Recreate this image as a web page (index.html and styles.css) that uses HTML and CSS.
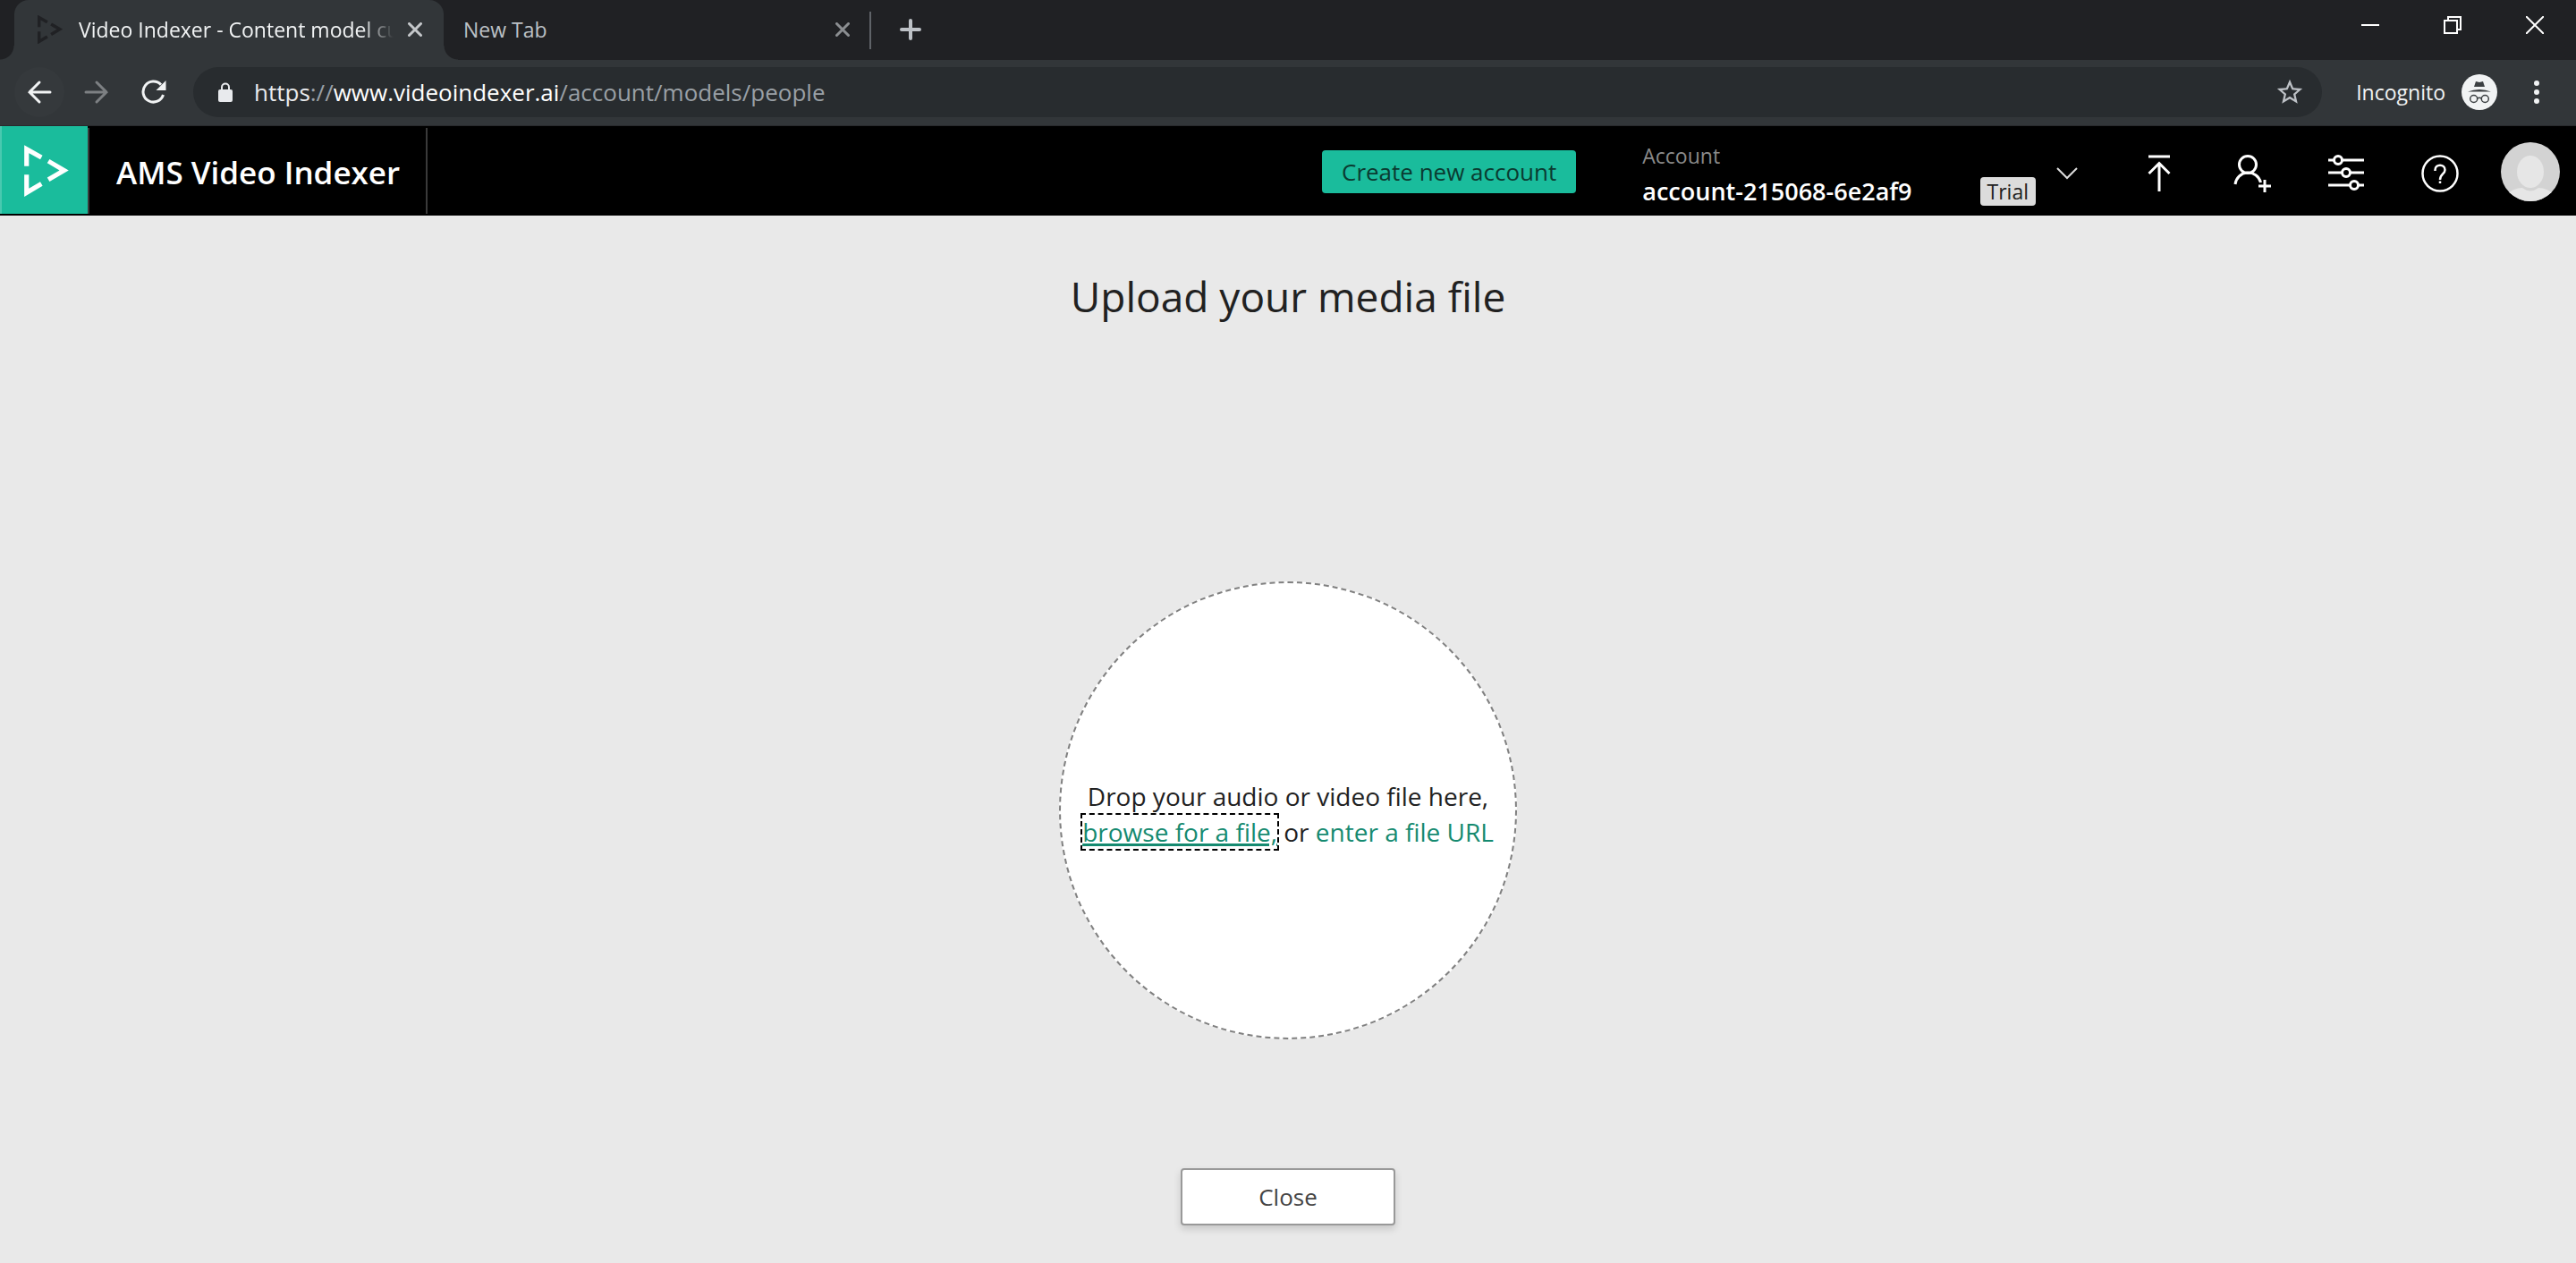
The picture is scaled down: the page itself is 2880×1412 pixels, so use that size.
FILE: index.html
```html
<!DOCTYPE html>
<html lang="en">
<head>
<meta charset="utf-8">
<title>Video Indexer - Content model customization</title>
<link rel="stylesheet" href="styles.css">
</head>
<body>
<div class="browser">
  <div class="tabstrip">
    <div class="tab tab-active">
      <svg class="favicon" width="28" height="32" viewBox="0 0 48 56" aria-hidden="true"><path d="M2.500 23V4.500L18.500 13.500M2.500 32V51.500L18.500 42M26 17.500L43 27.500L26 37.500" fill="none" stroke="#202124" stroke-width="6"/></svg>
      <span class="tab-title">Video Indexer - Content model cu</span>
      <button class="icon-btn tab-close" aria-label="Close tab"><svg width="16" height="16" viewBox="0 0 16 16"><path d="M1.500 1.500L14.500 14.500M14.500 1.500L1.500 14.500" stroke="#c4c7ca" stroke-width="3" stroke-linecap="round"/></svg></button>
    </div>
    <div class="tab tab-idle">
      <span class="tab-title">New Tab</span>
      <button class="icon-btn tab-close" aria-label="Close tab"><svg width="16" height="16" viewBox="0 0 16 16"><path d="M1.500 1.500L14.500 14.500M14.500 1.500L1.500 14.500" stroke="#8b8e91" stroke-width="3" stroke-linecap="round"/></svg></button>
    </div>
    <button class="icon-btn new-tab" aria-label="New tab"><svg width="24" height="24" viewBox="0 0 24 24"><path d="M12 2V22M2 12H22" stroke="#bdc1c6" stroke-width="4" stroke-linecap="round"/></svg></button>
    <div class="window-controls">
      <button class="icon-btn win-btn" aria-label="Minimize"><svg width="20" height="20" viewBox="0 0 20 20"><path d="M0 10H20" stroke="#fff" stroke-width="2"/></svg></button>
      <button class="icon-btn win-btn" aria-label="Restore"><svg width="20" height="20" viewBox="0 0 20 20"><path d="M1 5H15V19H1ZM5 5V1H19V15H15" fill="none" stroke="#fff" stroke-width="2"/></svg></button>
      <button class="icon-btn win-btn" aria-label="Close window"><svg width="20" height="20" viewBox="0 0 20 20"><path d="M0 0L20 20M20 0L0 20" stroke="#fff" stroke-width="2"/></svg></button>
    </div>
  </div>
  <div class="toolbar">
    <button class="icon-btn nav-btn nav-back" aria-label="Back"><svg width="28" height="28" viewBox="0 0 28 28"><path d="M26 14H3M14 3L3 14L14 25" fill="none" stroke="#f1f3f4" stroke-width="3" stroke-linecap="round"/></svg></button>
    <button class="icon-btn nav-btn" aria-label="Forward" disabled><svg width="28" height="28" viewBox="0 0 28 28"><path d="M2 14H25M14 3L25 14L14 25" fill="none" stroke="#7d8083" stroke-width="3" stroke-linecap="round"/></svg></button>
    <button class="icon-btn nav-btn" aria-label="Reload"><svg width="28" height="28" viewBox="0 0 28 28"><path d="M24.500 17A11.500 11.500 0 1 1 22 5.800" fill="none" stroke="#f1f3f4" stroke-width="3"/><path d="M27.500 1V12H16.500Z" fill="#f1f3f4"/></svg></button>
    <div class="omnibox">
      <svg class="lock" width="18" height="22" viewBox="0 0 18 22" aria-hidden="true"><rect x="1" y="8" width="16" height="14" rx="2" fill="#e8eaed"/><path d="M5 9V5.500A4 4 0 0 1 13 5.500V9" fill="none" stroke="#e8eaed" stroke-width="2"/></svg>
      <div class="url" role="textbox" aria-label="Address" contenteditable="true" spellcheck="false">https<span class="url-dim">://</span><span class="url-host">www.videoindexer.ai</span><span class="url-dim">/account/models/people</span></div>
      <button class="icon-btn star" aria-label="Bookmark this page"><svg width="34" height="34" viewBox="0 0 24 24"><path d="M22 9.240l-7.190-.620L12 2 9.190 8.630 2 9.240l5.460 4.730L5.820 21 12 17.270 18.180 21l-1.630-7.030L22 9.240zM12 15.400l-3.760 2.270 1-4.280-3.320-2.880 4.380-.380L12 6.100l1.710 4.040 4.380.380-3.320 2.880 1 4.280L12 15.400z" fill="#bdc1c6"/></svg></button>
    </div>
    <div class="profile">
      <span>Incognito</span>
      <svg width="40" height="40" viewBox="0 0 40 40" aria-hidden="true"><circle cx="20" cy="20" r="20" fill="#f1f3f4"/><path d="M16 8L20 9L24 8L26 14H14ZM7 19.500Q13 17 20 17T33 19.500Z" fill="#3c4043"/><g fill="none" stroke="#3c4043" stroke-width="1.500"><circle cx="13.700" cy="27.500" r="4"/><circle cx="26.300" cy="27.500" r="4"/><path d="M17.500 27Q20 25.500 22.500 27"/></g></svg>
    </div>
    <button class="icon-btn kebab" aria-label="Menu"><svg width="8" height="28" viewBox="0 0 8 28"><g fill="#f1f3f4"><circle cx="4" cy="4" r="3"/><circle cx="4" cy="14" r="3"/><circle cx="4" cy="24" r="3"/></g></svg></button>
  </div>
</div>

<header class="app-header">
  <a class="logo" href="#" aria-label="Home"><svg width="50" height="58" viewBox="0 0 48 56"><path d="M2.500 23V4.500L18.500 13.500M2.500 32V51.500L18.500 42M26 17.500L43 27.500L26 37.500" fill="none" stroke="#fff" stroke-width="5"/></svg></a>
  <a class="brand" href="#">AMS Video Indexer</a>
  <div class="header-tools">
    <button class="create">Create new account</button>
    <button class="account">
      <span class="account-text"><span class="account-label">Account</span><span class="account-name">account-215068-6e2af9</span></span>
      <span class="trial">Trial</span>
      <svg width="24" height="14" viewBox="0 0 24 14"><path d="M1 1L12 12L23 1" fill="none" stroke="#ddd" stroke-width="2"/></svg>
    </button>
    <button class="icon-btn tool" aria-label="Upload"><svg width="42" height="42" viewBox="0 0 42 42"><path d="M10 2H34M22 41V9M10.500 21L22 9.500L33.500 21" fill="none" stroke="#fff" stroke-width="3"/></svg></button>
    <button class="icon-btn tool" aria-label="Invite person"><svg width="42" height="42" viewBox="0 0 42 42"><g fill="none" stroke="#fff"><circle cx="16" cy="11" r="9.500" stroke-width="3"/><path d="M2 33A14.500 14.500 0 0 1 30.500 31" stroke-width="3"/><path d="M28 35H42M35 28V42" stroke-width="3"/></g></svg></button>
    <button class="icon-btn tool" aria-label="Customize models"><svg width="42" height="42" viewBox="0 0 42 42"><path d="M1 6H41M1 20H41M1 34H41" stroke="#fff" stroke-width="3"/><g fill="#000" stroke="#fff" stroke-width="3"><circle cx="12" cy="6" r="4.500"/><circle cx="21" cy="20" r="4.500"/><circle cx="30" cy="34" r="4.500"/></g></svg></button>
    <button class="icon-btn tool" aria-label="Help"><svg width="42" height="42" viewBox="0 0 42 42"><g fill="none" stroke="#fff"><circle cx="21" cy="21" r="19.500" stroke-width="2.500"/><path d="M15.500 18V17C15.500 10 26.500 10 26.500 17C26.500 21.500 21 21.500 21 28M21 29.500V32" stroke-width="2.500"/></g></svg></button>
    <button class="icon-btn avatar" aria-label="Profile"><svg width="66" height="66" viewBox="0 0 66 66"><defs><clipPath id="disc"><circle cx="33" cy="33" r="33"/></clipPath></defs><g clip-path="url(#disc)"><rect width="66" height="66" fill="#d3d3d3"/><ellipse cx="33" cy="33" rx="15" ry="18" fill="#e6e6e6"/><path d="M4 60Q14 51 24 51Q33 58 42 51Q52 51 62 60V66H4Z" fill="#e6e6e6"/></g></svg></button>
  </div>
</header>

<main class="upload">
  <h1>Upload your media file</h1>
  <div class="dropzone">
    <p>Drop your audio or video file here,<br><a class="browse" href="#">browse for a file,</a> or <a class="link" href="#">enter a file URL</a></p>
  </div>
  <button class="close">Close</button>
</main>
</body>
</html>
```
FILE: styles.css
```css
* {
  box-sizing: border-box;
}

body {
  margin: 0;
  min-height: 100vh;
  display: flex;
  flex-direction: column;
  background: #e9e9e9;
  color: #212121;
  font-family: "Open Sans", "Noto Sans", sans-serif;
  font-size: 26px;
}

button {
  margin: 0;
  padding: 0;
  border: 0;
  background: none;
  color: inherit;
  font: inherit;
}

a {
  color: inherit;
  text-decoration: none;
}

svg {
  display: block;
  flex: none;
}

.icon-btn {
  display: flex;
  flex: none;
  align-items: center;
  justify-content: center;
}

/* Browser chrome */
.tabstrip {
  display: flex;
  height: 67px;
  padding-left: 16px;
  background: #202124;
  color: #bdc1c6;
  font-size: 23px;
}

.tab {
  display: flex;
  align-items: center;
  width: 480px;
  padding: 0 24px 2px 26px;
}

.tab-active {
  position: relative;
  border-radius: 16px 16px 0 0;
  background: #323639;
  color: #f1f3f4;
}

.tab-active::before,
.tab-active::after {
  content: "";
  position: absolute;
  bottom: 0;
  width: 16px;
  height: 16px;
}

.tab-active::before {
  right: 100%;
  background: radial-gradient(circle at 0 0, #202124 15px, #323639 16px);
}

.tab-active::after {
  left: 100%;
  background: radial-gradient(circle at 100% 0, #202124 15px, #323639 16px);
}

.tab-title {
  flex: 1;
  min-width: 0;
  white-space: nowrap;
}

.tab-active .tab-title {
  margin: 0 16px 0 18px;
  -webkit-mask-image: linear-gradient(to right, #000 90%, transparent);
  mask-image: linear-gradient(to right, #000 90%, transparent);
}

.tab-idle {
  width: 478px;
  padding: 0 22px 2px;
  border-right: 2px solid transparent;
  border-image: linear-gradient(to bottom, transparent 14px, #5f6368 14px, #5f6368 54px, transparent 54px) 1;
}

.new-tab {
  width: 88px;
  height: 66px;
}

.window-controls {
  display: flex;
  margin-left: auto;
}

.win-btn {
  width: 92px;
  height: 56px;
}

.toolbar {
  display: flex;
  align-items: center;
  height: 74px;
  padding: 0 40px 2px 16px;
  border-bottom: 1px solid #282a2c;
  background: #323639;
  color: #f1f3f4;
}

.nav-btn {
  width: 56px;
  height: 56px;
  margin-right: 8px;
  border-radius: 50%;
}

.nav-back {
  background: #35393c;
}

.omnibox {
  display: flex;
  flex: 1;
  align-items: center;
  height: 56px;
  margin-left: 8px;
  padding: 0 19px 0 27px;
  border-radius: 28px;
  background: #282c2f;
}

.url {
  flex: 1;
  margin-left: 23px;
  color: #e8eaed;
  outline: 0;
  white-space: nowrap;
}

.url-host {
  color: #fff;
}

.url-dim {
  color: #9aa0a6;
}

.profile {
  display: flex;
  align-items: center;
  gap: 18px;
  margin: 0 40px 0 38px;
  font-size: 23px;
}

/* Application header */
.app-header {
  display: flex;
  height: 100px;
  background: #000;
  color: #fff;
}

.logo {
  display: flex;
  align-items: center;
  width: 98px;
  height: 98px;
  padding: 2px 0 0 25px;
  border-left: 2px solid #49c9b0;
  background: #1abc9c;
}

.brand {
  display: flex;
  align-items: center;
  height: 96px;
  margin-top: 2px;
  padding: 2px 29px 0 30px;
  border: solid #3a3a3a;
  border-width: 0 2px;
  font-size: 35px;
  font-weight: 600;
}

.header-tools {
  display: flex;
  align-items: center;
  margin-left: auto;
  padding: 2px 18px 0 0;
}

.create {
  height: 48px;
  padding: 0 22px;
  border-radius: 4px;
  background: #1abc9c;
  color: #0a3b31;
}

.account {
  display: flex;
  align-items: center;
  margin: 0 69px 0 74px;
  padding-top: 4px;
  text-align: left;
}

.account-text {
  display: flex;
  flex-direction: column;
}

.account-label {
  color: #8a8a8a;
  font-size: 23px;
  line-height: 40px;
}

.account-name {
  font-size: 27px;
  font-weight: 600;
  line-height: 40px;
}

.trial {
  align-self: flex-end;
  margin: 0 23px 4px 76px;
  padding: 0 8px;
  border-radius: 4px;
  background: #dcdcdc;
  color: #212121;
  font-size: 23px;
  line-height: 32px;
}

.tool {
  width: 42px;
  margin-right: 63px;
  padding-top: 4px;
}

.avatar {
  margin-left: -16px;
}

/* Upload page */
.upload {
  display: flex;
  flex: 1;
  flex-direction: column;
  align-items: center;
  padding: 58px 32px 42px;
}

h1 {
  margin: 0;
  font-size: 46px;
  font-weight: 400;
  line-height: 64px;
}

.dropzone {
  display: flex;
  align-items: center;
  justify-content: center;
  width: 512px;
  height: 512px;
  margin: 287px 0 144px;
  padding-top: 8px;
  border: 2px dashed #808080;
  border-radius: 50%;
  background: #fff;
  text-align: center;
  white-space: nowrap;
}

.dropzone p {
  margin: 0;
  font-size: 28px;
  line-height: 40px;
}

.browse {
  color: #158a70;
  outline: 2px dashed #000;
  text-decoration: underline;
  text-decoration-thickness: 3px;
}

.link {
  color: #158a70;
}

.close {
  width: 240px;
  height: 64px;
  border: 2px solid #999;
  border-radius: 4px;
  background: #fff;
  box-shadow: 0 4px 8px rgba(0, 0, 0, 0.15);
  color: #444;
}
```
